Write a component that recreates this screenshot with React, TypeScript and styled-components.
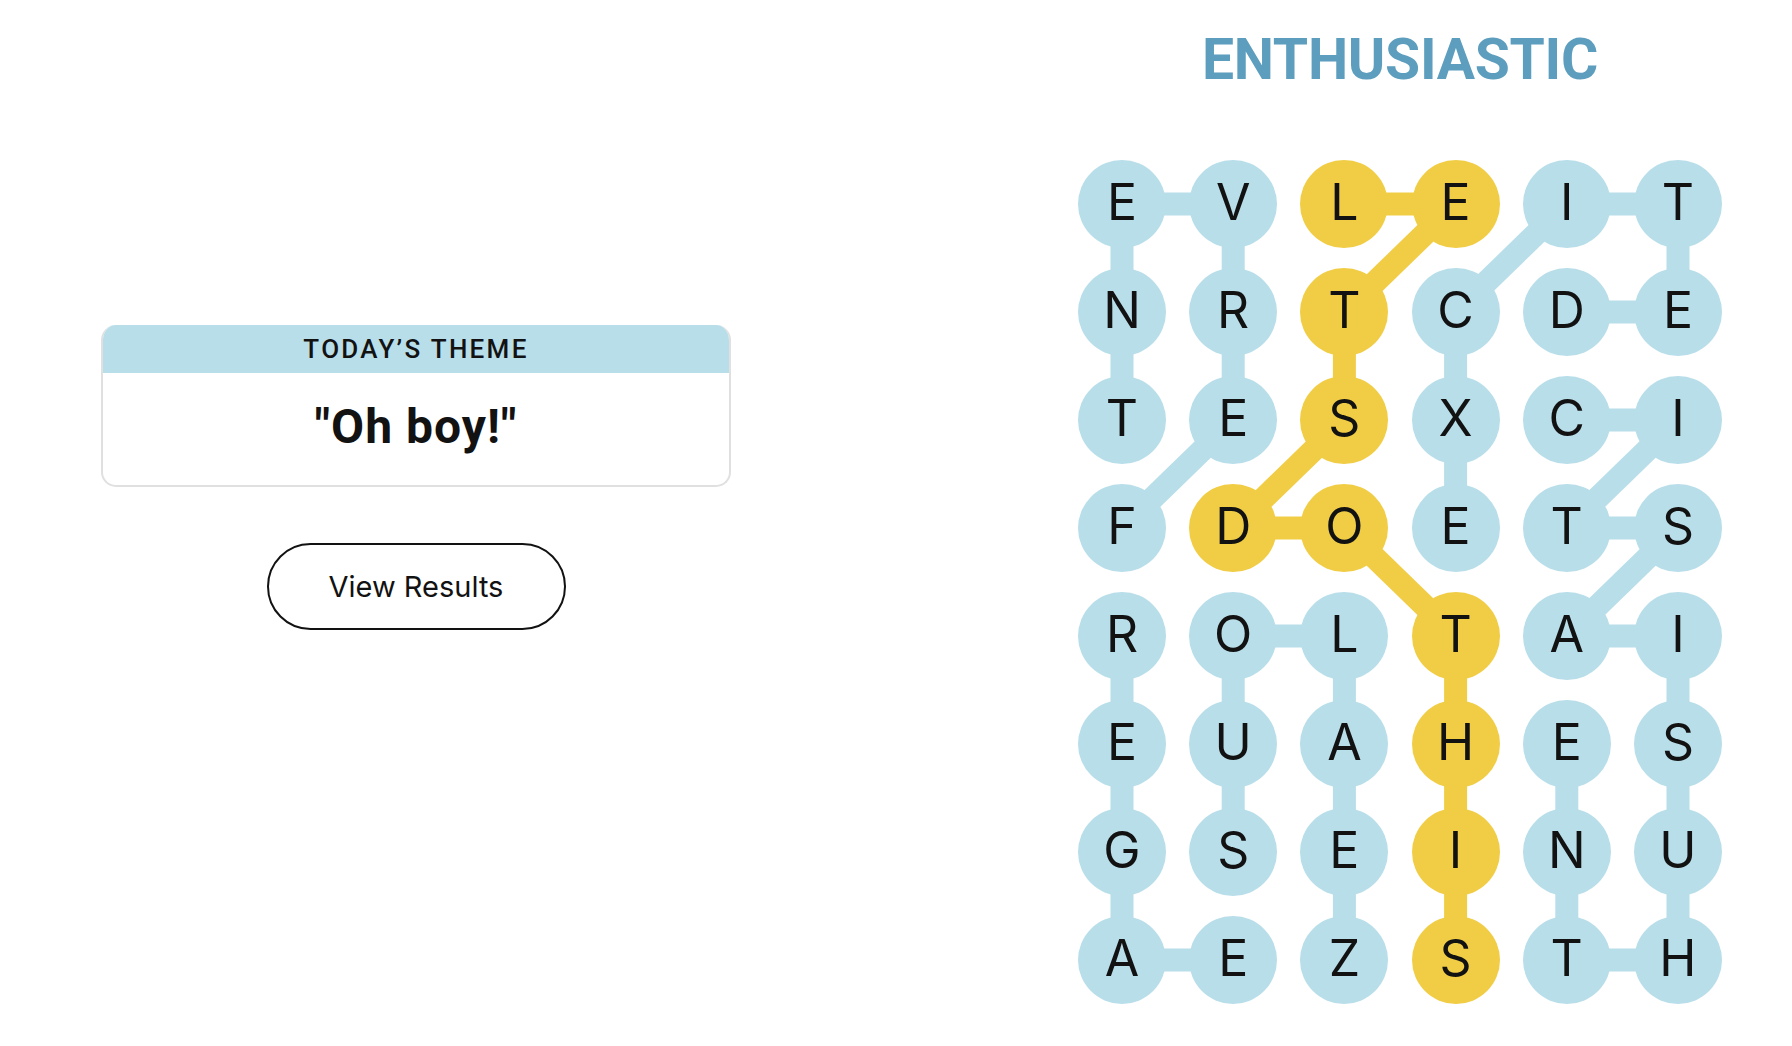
import styled, { createGlobalStyle } from 'styled-components'

const BLUE = '#b8deea'
const YELLOW = '#f1cd45'

const COLS = 6
const CELL = 88
const COL_STEP = 111.2
const ROW_STEP = 108

const board = [
  'EVLEIT',
  'NRTCDE',
  'TESXCI',
  'FDOETS',
  'ROLTAI',
  'EUAHES',
  'GSEINU',
  'AEZSTH',
]

type Cell = [number, number]

// found words, as paths of [row, col]
const words: { path: Cell[]; spangram?: boolean }[] = [
  {
    path: [[3, 0], [2, 1], [1, 1], [0, 1], [0, 0], [1, 0], [2, 0]],
  },
  {
    path: [[3, 3], [2, 3], [1, 3], [0, 4], [0, 5], [1, 5], [1, 4]],
  },
  {
    path: [
      [5, 4], [6, 4], [7, 4], [7, 5], [6, 5], [5, 5],
      [4, 5], [4, 4], [3, 5], [3, 4], [2, 5], [2, 4],
    ],
  },
  {
    path: [[7, 1], [7, 0], [6, 0], [5, 0], [4, 0]],
  },
  {
    path: [[7, 2], [6, 2], [5, 2], [4, 2], [4, 1], [5, 1], [6, 1]],
  },
  {
    path: [
      [0, 2], [0, 3], [1, 2], [2, 2], [3, 1],
      [3, 2], [4, 3], [5, 3], [6, 3], [7, 3],
    ],
    spangram: true,
  },
]

const isSpangram = (r: number, c: number) =>
  words.some((w) => w.spangram && w.path.some(([pr, pc]) => pr === r && pc === c))

const cx = (c: number) => CELL / 2 + c * COL_STEP
const cy = (r: number) => CELL / 2 + r * ROW_STEP

const GlobalStyle = createGlobalStyle`
  body {
    margin: 0;
    background: #fff;
    font-family: Inter, 'Liberation Sans', sans-serif;
    color: #121212;
  }
`

function App() {
  const boardWidth = CELL + (COLS - 1) * COL_STEP
  const boardHeight = CELL + (board.length - 1) * ROW_STEP

  return (
    <>
      <GlobalStyle />
      <Page>
        <LeftColumn>
          <ThemeCard>
            <ThemeHeader>TODAY’S THEME</ThemeHeader>
            <ThemeBody>"Oh boy!"</ThemeBody>
          </ThemeCard>
          <ResultsButton type="button">View Results</ResultsButton>
        </LeftColumn>

        <RightColumn>
          <WordTitle>ENTHUSIASTIC</WordTitle>
          <Board>
            <Lines width={boardWidth} height={boardHeight}>
              {words.map((w, i) =>
                w.path.slice(1).map(([r, c], j) => {
                  const [pr, pc] = w.path[j]
                  return (
                    <line
                      key={`${i}-${j}`}
                      x1={cx(pc)}
                      y1={cy(pr)}
                      x2={cx(c)}
                      y2={cy(r)}
                      stroke={w.spangram ? YELLOW : BLUE}
                      strokeWidth={23}
                    />
                  )
                })
              )}
            </Lines>
            {board.map((row, r) =>
              row.split('').map((letter, c) => (
                <Letter key={`${r}-${c}`} $spangram={isSpangram(r, c)}>
                  {letter}
                </Letter>
              ))
            )}
          </Board>
        </RightColumn>
      </Page>
    </>
  )
}

const Page = styled.main`
  display: flex;
  align-items: flex-start;
  padding-left: 101px;
  min-height: 100vh;
  box-sizing: border-box;
`

const LeftColumn = styled.section`
  width: 630px;
  padding-top: 325px;
  display: flex;
  flex-direction: column;
  align-items: center;
  gap: 56px;
`

const ThemeCard = styled.div`
  width: 100%;
  border: 2px solid #e0e0e0;
  border-top: none;
  border-radius: 15px;
  overflow: hidden;
  box-sizing: border-box;
`

const ThemeHeader = styled.div`
  height: 48px;
  margin: 0 -2px;
  background: ${BLUE};
  display: flex;
  align-items: center;
  justify-content: center;
  font-family: Roboto, 'Liberation Sans', sans-serif;
  font-weight: 500;
  font-size: 26px;
  letter-spacing: 2.3px;
  color: #121212;
`

const ThemeBody = styled.div`
  padding: 30px 0 34px;
  text-align: center;
  font-family: Roboto, 'Liberation Sans', sans-serif;
  font-weight: 700;
  font-size: 48px;
  line-height: 1;
  letter-spacing: 1px;
  color: #121212;
`

const ResultsButton = styled.button`
  width: 299px;
  height: 87px;
  border: 2px solid #121212;
  border-radius: 44px;
  background: #fff;
  font-family: Inter, 'Liberation Sans', sans-serif;
  font-size: 29px;
  font-weight: 400;
  color: #121212;
  cursor: pointer;
`

const RightColumn = styled.section`
  margin-left: 347px;
  display: flex;
  flex-direction: column;
  align-items: center;
`

const WordTitle = styled.h1`
  margin: 31px 0 72px;
  font-family: Roboto, 'Liberation Sans', sans-serif;
  font-weight: 700;
  font-size: 57px;
  line-height: 1;
  letter-spacing: -0.3px;
  color: #5d9ebe;
`

const Board = styled.div`
  position: relative;
  display: grid;
  grid-template-columns: repeat(${COLS}, ${CELL}px);
  grid-auto-rows: ${CELL}px;
  column-gap: ${COL_STEP - CELL}px;
  row-gap: ${ROW_STEP - CELL}px;
`

const Lines = styled.svg`
  position: absolute;
  inset: 0;
  z-index: 0;
`

const Letter = styled.div<{ $spangram: boolean }>`
  position: relative;
  z-index: 1;
  width: ${CELL}px;
  height: ${CELL}px;
  border-radius: 50%;
  background: ${(p) => (p.$spangram ? YELLOW : BLUE)};
  display: flex;
  align-items: center;
  justify-content: center;
  padding-bottom: 5px;
  box-sizing: border-box;
  font-family: Inter, 'Liberation Sans', sans-serif;
  font-size: 50px;
  line-height: 1;
  color: #121212;
`

export default App
